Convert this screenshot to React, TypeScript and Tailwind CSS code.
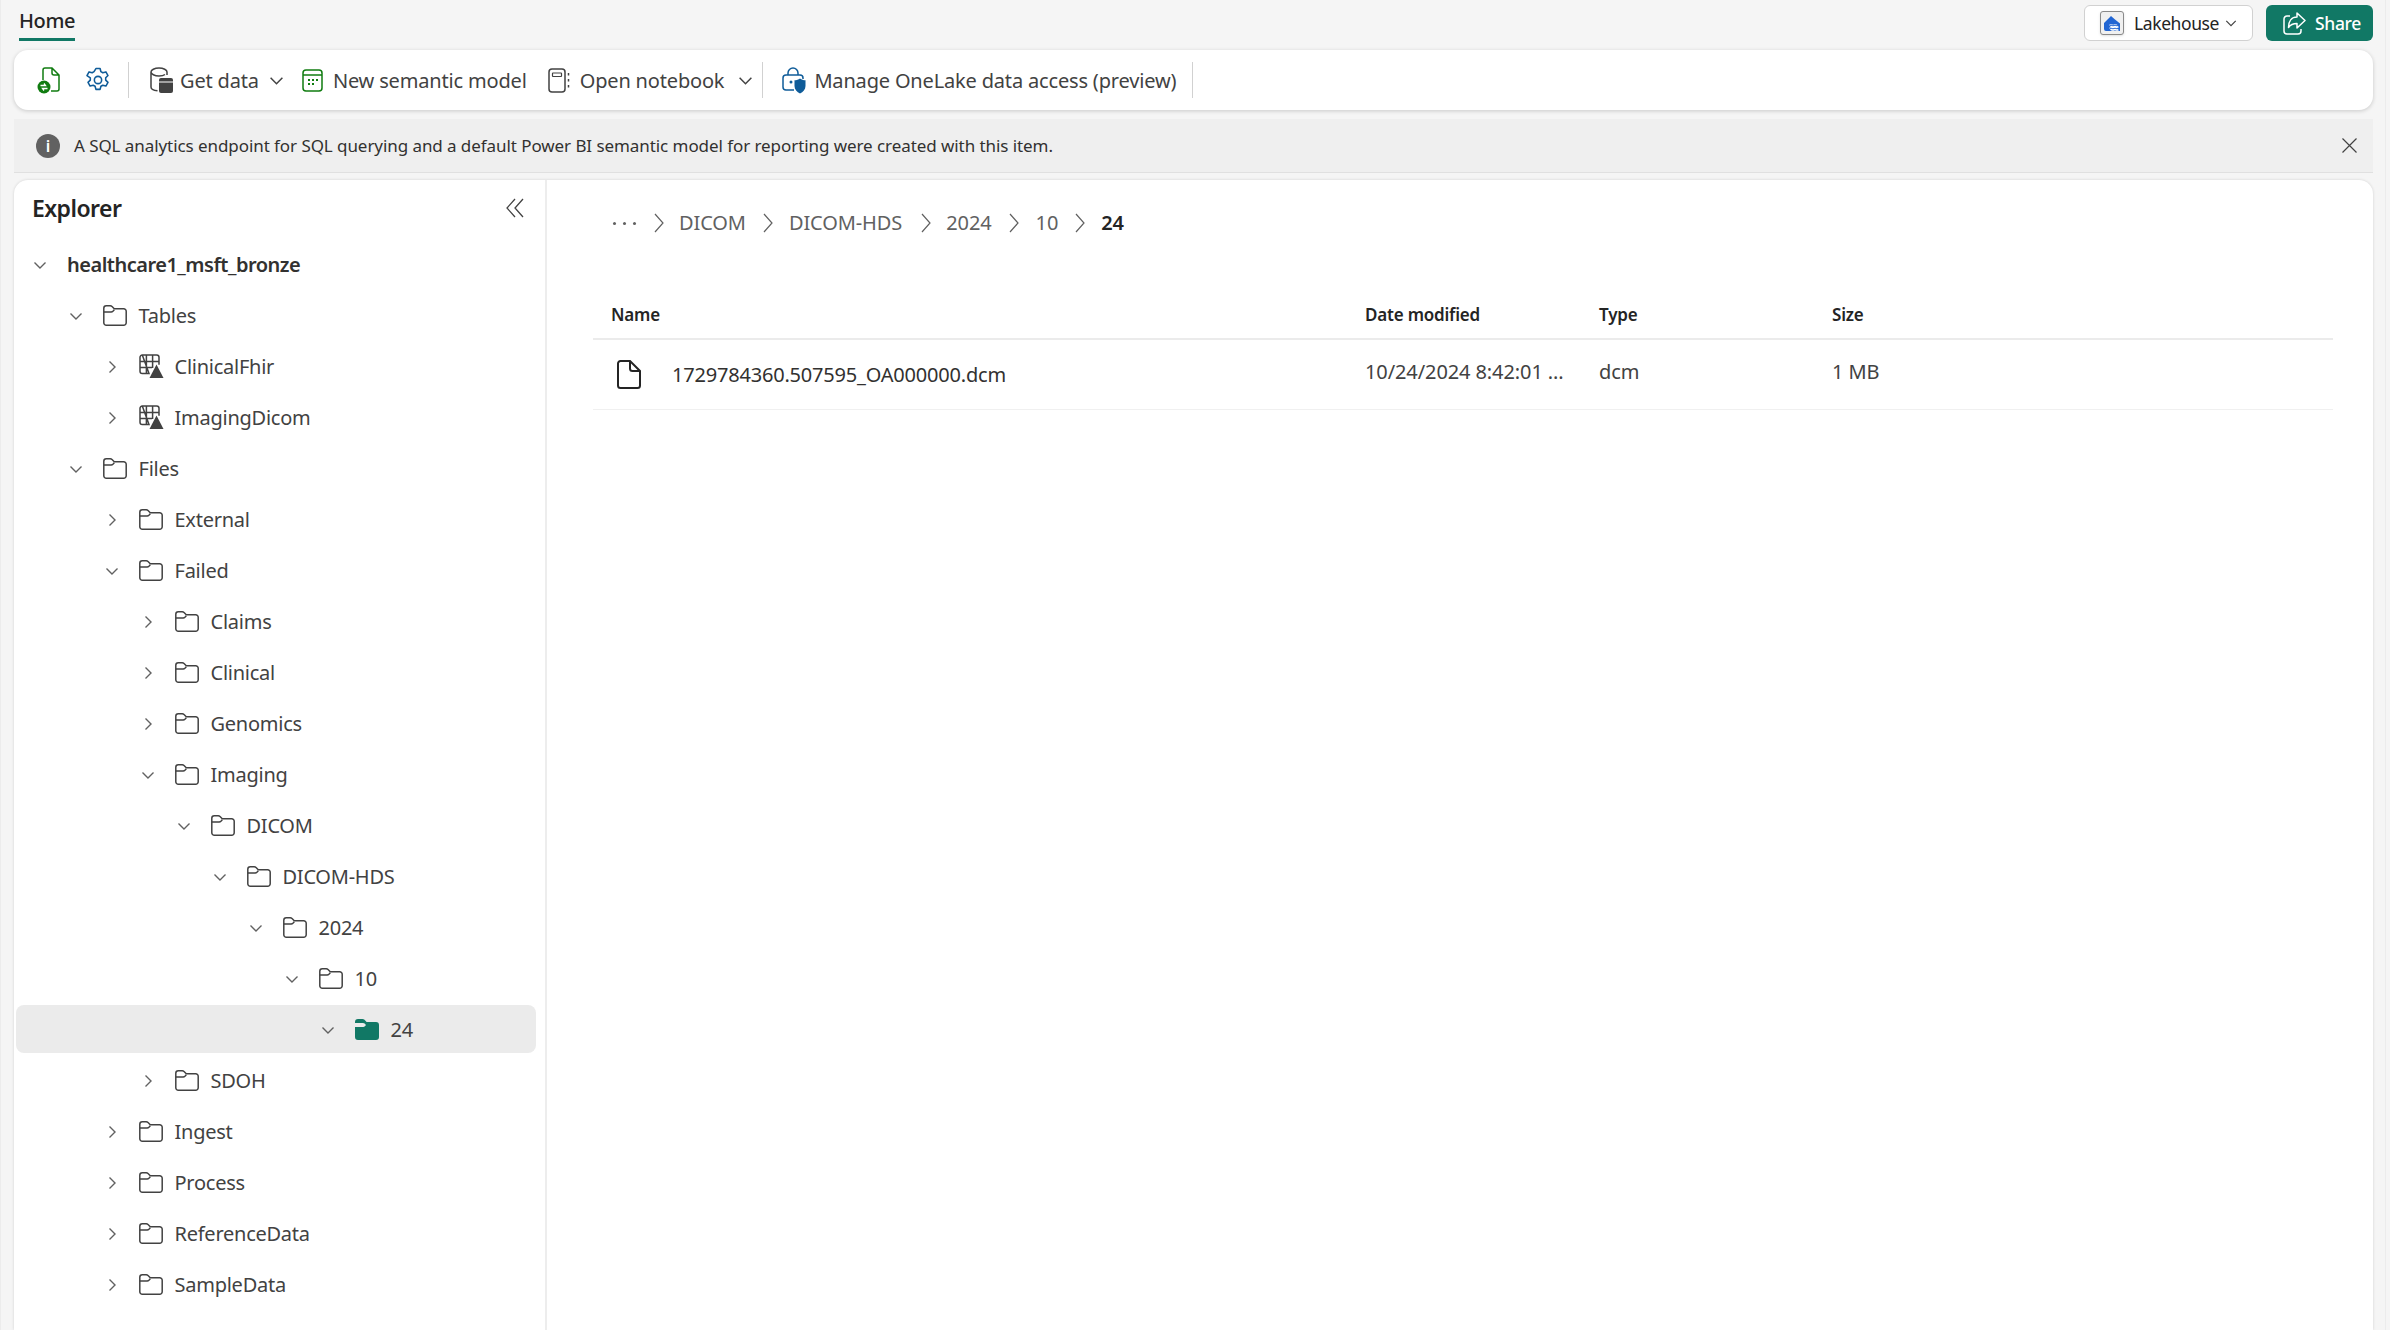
import React from "react";

const font = "font-['Noto_Sans','Open_Sans',sans-serif]";

function Folder({ filled }: { filled?: boolean }) {
  if (filled) {
    return (
      <svg width="24" height="21" viewBox="0 0 24 21" className="shrink-0">
        <path d="M0 3a3 3 0 0 1 3-3h4.5a3 3 0 0 1 2 .8L11.6 3H21a3 3 0 0 1 3 3v12a3 3 0 0 1-3 3H3a3 3 0 0 1-3-3V8h8.2a2.5 2.5 0 0 0 1.7-.7L11 6 9.6 4.6A2.5 2.5 0 0 0 8 4H0z" fill="#117865" />
      </svg>
    );
  }
  return (
    <svg width="24" height="21" viewBox="0 0 24 21" fill="none" stroke="#424242" strokeWidth="1.5" className="shrink-0">
      <path d="M.8 3.3A2.5 2.5 0 0 1 3.3.8h3.9a2.5 2.5 0 0 1 1.8.7l2.3 2.3h9.4a2.5 2.5 0 0 1 2.5 2.5v11.4a2.5 2.5 0 0 1-2.5 2.5H3.3a2.5 2.5 0 0 1-2.5-2.5z" />
      <path d="M.8 7h7.4a2.4 2.4 0 0 0 1.7-.7l1.4-1.6" />
    </svg>
  );
}

function TableIcon() {
  return (
    <svg width="25" height="25" viewBox="0 0 25 25" fill="none" className="shrink-0">
      <path d="M3.3 1h14.4A2.3 2.3 0 0 1 20 3.3v7.5M10 19.5H3.3A2.3 2.3 0 0 1 1 17.2V3.3A2.3 2.3 0 0 1 3.3 1zM1 7.5h19M1 13.5h12M7.4 1v18.5M13.6 1v13" stroke="#424242" strokeWidth="1.5" />
      <path d="M17.5 10.5 24.5 24h-14z" fill="#424242" />
    </svg>
  );
}

function Chevron({ open, size = 14, color = "#616161" }: { open?: boolean; size?: number; color?: string }) {
  return (
    <svg width={size} height={size} viewBox="0 0 14 14" fill="none" stroke={color} strokeWidth="1.4" className="shrink-0">
      {open ? <path d="M1.5 4.5 7 10l5.5-5.5" /> : <path d="M4.5 1.5 10 7l-5.5 5.5" />}
    </svg>
  );
}

function Crumb() {
  return (
    <svg width="10" height="20" viewBox="0 0 10 20" fill="none" stroke="#616161" strokeWidth="1.2" className="shrink-0">
      <path d="M1 1l8 9-8 9" />
    </svg>
  );
}

type Row = { label: string; depth: number; open?: boolean; kind?: "root" | "table" | "selected" };
const rows: Row[] = [
  { label: "healthcare1_msft_bronze", depth: 0, open: true, kind: "root" },
  { label: "Tables", depth: 1, open: true },
  { label: "ClinicalFhir", depth: 2, kind: "table" },
  { label: "ImagingDicom", depth: 2, kind: "table" },
  { label: "Files", depth: 1, open: true },
  { label: "External", depth: 2 },
  { label: "Failed", depth: 2, open: true },
  { label: "Claims", depth: 3 },
  { label: "Clinical", depth: 3 },
  { label: "Genomics", depth: 3 },
  { label: "Imaging", depth: 3, open: true },
  { label: "DICOM", depth: 4, open: true },
  { label: "DICOM-HDS", depth: 5, open: true },
  { label: "2024", depth: 6, open: true },
  { label: "10", depth: 7, open: true },
  { label: "24", depth: 8, open: true, kind: "selected" },
  { label: "SDOH", depth: 3 },
  { label: "Ingest", depth: 2 },
  { label: "Process", depth: 2 },
  { label: "ReferenceData", depth: 2 },
  { label: "SampleData", depth: 2 },
];

function TreeRow({ row }: { row: Row }) {
  const selected = row.kind === "selected";
  const root = row.kind === "root";
  return (
    <div className="h-[51px] flex items-center relative">
      {selected && <div className="absolute left-[2px] right-[9px] top-[1px] bottom-[2px] rounded-[8px] bg-[#ebebeb]" />}
      <div className="relative flex items-center" style={{ paddingLeft: 19 + row.depth * 36 }}>
        <Chevron open={row.open} />
        {root ? (
          <span className="ml-[20px] text-[20px] font-semibold text-[#323130] tracking-[-0.5px]">{row.label}</span>
        ) : (
          <>
            <span className="ml-[20px] mr-[11.5px] w-[24px] h-[25px] flex items-center justify-center">
              {row.kind === "table" ? <TableIcon /> : <Folder filled={selected} />}
            </span>
            <span className="text-[20px] text-[#424242] tracking-[-0.25px]">{row.label}</span>
          </>
        )}
      </div>
    </div>
  );
}

function ToolButton({ icon, label, caret, gap = "ml-[8px]", caretGap = "ml-[11px]" }: { icon: React.ReactNode; label: string; caret?: boolean; gap?: string; caretGap?: string }) {
  return (
    <div className="flex items-center h-[36px]">
      {icon}
      <span className={`${gap} pt-[2px] text-[20px] text-[#424242] tracking-[-0.17px] whitespace-nowrap`}>{label}</span>
      {caret && (
        <span className={caretGap}>
          <Chevron open size={15} color="#424242" />
        </span>
      )}
    </div>
  );
}

export default function App() {
  return (
    <div className={`${font} w-[2390px] h-[1330px] overflow-hidden bg-[#f5f5f5] flex`}>
      <div className="w-[2385px] shrink-0 border-l border-[#ececec] flex flex-col pl-[13px] pr-[12px]">
        <div className="h-[50px] flex items-start justify-between shrink-0">
          <div className="ml-[5px] h-[41px] flex flex-col justify-between pt-[6px]">
            <span className="text-[20px] leading-[30px] font-medium text-[#242424] tracking-[-0.4px]">Home</span>
            <div className="h-[3px] bg-[#117865]" />
          </div>
          <div className="flex gap-[13px] pt-[5px]">
            <div className="h-[36px] w-[169px] bg-white border border-[#d1d1d1] rounded-[6px] flex items-center pl-[15px]">
              <div className="w-[24px] h-[24px] bg-[#f0f0f0] border border-[#8a8a8a] rounded-[3px] flex items-center justify-center shadow-sm">
                <svg width="18" height="18" viewBox="0 0 18 18">
                  <path d="M1 9l7-7 4 3.5 5 4V17H3a2 2 0 0 1-2-2z" fill="#2266d3" />
                  <path d="M7 12c1.5-1 2.5 1 4 0s2.5 1 4 0M7 15c1.5-1 2.5 1 4 0s2.5 1 4 0" stroke="#fff" strokeWidth="3" fill="none" />
                  <path d="M7 11.5c1.5-1 2.5 1 4 0s2.5 1 4 0M7 14.5c1.5-1 2.5 1 4 0s2.5 1 4 0" stroke="#2266d3" strokeWidth="1" fill="none" />
                </svg>
              </div>
              <span className="ml-[10px] text-[17.5px] text-[#242424] tracking-[-0.4px]">Lakehouse</span>
              <span className="ml-[6px]">
                <Chevron open size={12} color="#424242" />
              </span>
            </div>
            <div className="h-[36px] w-[107px] bg-[#117865] rounded-[6px] flex items-center pl-[17px]">
              <svg width="23" height="23" viewBox="0 0 23 23" fill="none" stroke="#fff" strokeWidth="1.5">
                <path d="M7 4H4a3 3 0 0 0-3 3v12a3 3 0 0 0 3 3h11a3 3 0 0 0 3-3v-2" />
                <path d="M14 1l8 7.5-8 7.5v-4.500c-4 0-6.500 1-8.500 4 0-6 3-10.500 8.500-10.500z" strokeLinejoin="round" />
              </svg>
              <span className="ml-[9px] text-[17.5px] font-medium text-white tracking-[-0.35px]">Share</span>
            </div>
          </div>
        </div>

        <div className="h-[60px] shrink-0 bg-white rounded-[14px] shadow-[0_1px_4px_rgba(0,0,0,0.18)] flex items-center pl-[23px]">
          <svg width="23" height="27" viewBox="0 0 23 27" fill="none" className="shrink-0">
            <path d="M6 13V3a2 2 0 0 1 2-2h7l7 7v14a2 2 0 0 1-2 2h-6M15 1v5a2 2 0 0 0 2 2h5" stroke="#107c10" strokeWidth="1.5" />
            <circle cx="7" cy="20" r="6.5" fill="#107c10" />
            <path d="M3.5 18.5h5l-1.500-2M10.500 21.500h-5l1.500 2" stroke="#fff" strokeWidth="1.3" />
          </svg>
          <svg width="26" height="26" viewBox="0 0 25 25" fill="none" stroke="#0f5c99" strokeWidth="1.5" className="ml-[25px] shrink-0" strokeLinejoin="round">
            <circle cx="12.5" cy="12.5" r="3.5" />
            <path d="M10.5 1.5h4l.8 3 1.8 1 3-.8 2 3.5-2.2 2.2v2.2l2.2 2.2-2 3.5-3-.8-1.800 1-.8 3h-4l-.8-3-1.800-1-3 .8-2-3.500 2.200-2.200v-2.200L1.900 8.200l2-3.500 3 .8 1.800-1z" />
          </svg>
          <div className="ml-[17px] w-px h-[36px] bg-[#d1d1d1]" />
          <div className="ml-[21px]">
            <ToolButton
              label="Get data"
              caret
              gap="ml-[7px]"
              caretGap="ml-[10px]"
              icon={
                <svg width="23" height="26" viewBox="0 0 23 26" fill="none" className="shrink-0">
                  <path d="M17 8V5c0-2-3.500-4-8-4S1 3 1 5v15c0 2 3 3.500 6.500 3.800M1 5c0 2 3.500 4 8 4 3 0 5-.7 6-1.500" stroke="#424242" strokeWidth="1.5" />
                  <rect x="9" y="11" width="14" height="15" rx="2" fill="#424242" />
                  <path d="M9 15h14" stroke="#fff" strokeWidth="1" />
                </svg>
              }
            />
          </div>
          <div className="ml-[18px]">
            <ToolButton
              label="New semantic model"
              gap="ml-[10px]"
              icon={
                <svg width="21" height="23" viewBox="0 0 21 23" fill="none" className="shrink-0">
                  <rect x="1" y="1" width="19" height="21" rx="3" stroke="#107c10" strokeWidth="1.5" />
                  <path d="M1 6h19" stroke="#107c10" strokeWidth="1.5" />
                  <path d="M6 10h2v2H6zM10 10h2v2h-2zM14 10h2v2h-2zM6 14h2v2H6zM10 14h2v2h-2z" fill="#107c10" />
                </svg>
              }
            />
          </div>
          <div className="ml-[21px]">
            <ToolButton
              label="Open notebook"
              gap="ml-[10px]"
              caret
              caretGap="ml-[14px]"
              icon={
                <svg width="22" height="25" viewBox="0 0 22 25" fill="none" stroke="#424242" strokeWidth="1.5" className="shrink-0">
                  <rect x="1" y="1" width="16" height="23" rx="3" />
                  <rect x="4.5" y="5" width="9" height="3.5" rx=".5" strokeWidth="1.2" />
                  <path d="M20.5 5v2.5M20.5 11v2.5M20.5 17v2.5" />
                </svg>
              }
            />
          </div>
          <div className="ml-[9px] w-px h-[36px] bg-[#d1d1d1]" />
          <div className="ml-[19px]">
            <ToolButton
              label="Manage OneLake data access (preview)"
              gap="ml-[8px]"
              icon={
                <svg width="24" height="27" viewBox="0 0 24 27" fill="none" className="shrink-0">
                  <path d="M6 8V6a5 5 0 0 1 10 0v2" stroke="#0f5c99" strokeWidth="1.5" />
                  <path d="M12 23H4a3 3 0 0 1-3-3V11a3 3 0 0 1 3-3h14a3 3 0 0 1 3 3v1" stroke="#0f5c99" strokeWidth="1.5" />
                  <circle cx="9" cy="15" r="1.5" fill="#0f5c99" />
                  <path d="M18 11.5c1.500 1.200 3.500 1.800 5.500 1.800V19c0 3.500-2.500 6-5.500 7.500-3-1.500-5.500-4-5.500-7.500v-5.700c2 0 4-.6 5.500-1.800z" fill="#0f5c99" />
                </svg>
              }
            />
          </div>
          <div className="ml-[16px] w-px h-[36px] bg-[#d1d1d1]" />
        </div>

        <div className="mt-[9px] h-[54px] shrink-0 bg-[#efefef] border-b border-[#e0e0e0] flex items-center pl-[22px] pr-[16px]">
          <div className="w-[24px] h-[24px] rounded-full bg-[#616161] text-white flex items-center justify-center text-[16px] font-semibold">i</div>
          <span className="ml-[14px] pt-[1px] text-[17px] text-[#323130] tracking-[-0.07px]">A SQL analytics endpoint for SQL querying and a default Power BI semantic model for reporting were created with this item.</span>
          <svg width="15" height="15" viewBox="0 0 15 15" stroke="#424242" strokeWidth="1.2" className="ml-auto shrink-0">
            <path d="M.5.5l14 14M14.5.5l-14 14" />
          </svg>
        </div>

        <div className="mt-[7px] flex-1 min-h-0 bg-white rounded-t-[14px] shadow-[0_0_3px_rgba(0,0,0,0.15)] flex overflow-hidden">
          <aside className="w-[533px] shrink-0 border-r-2 border-[#ededed] flex flex-col">
            <div className="h-[59px] pb-[3px] pl-[18px] pr-[21px] flex items-center justify-between">
              <span className="text-[23px] font-semibold text-[#242424] tracking-[-0.55px]">Explorer</span>
              <svg width="18" height="20" viewBox="0 0 18 20" fill="none" stroke="#424242" strokeWidth="1.3">
                <path d="M9 1L1 10l8 9M17 1l-8 9 8 9" />
              </svg>
            </div>
            <div>
              {rows.map((r) => (
                <TreeRow key={r.label + r.depth} row={r} />
              ))}
            </div>
          </aside>
          <main className="flex-1 min-w-0 pl-[46px] pr-[40px] flex flex-col">
            <div className="h-[86px] pl-[20px] flex items-center text-[20px] text-[#616161] tracking-[-0.1px]">
              <span className="w-[23px] flex justify-between">
                <i className="w-[3px] h-[3px] rounded-full bg-[#616161]" />
                <i className="w-[3px] h-[3px] rounded-full bg-[#616161]" />
                <i className="w-[3px] h-[3px] rounded-full bg-[#616161]" />
              </span>
              <span className="ml-[18px]"><Crumb /></span>
              <span className="ml-[15px]">DICOM</span>
              <span className="ml-[17px]"><Crumb /></span>
              <span className="ml-[16px]">DICOM-HDS</span>
              <span className="ml-[19px]"><Crumb /></span>
              <span className="ml-[15px]">2024</span>
              <span className="ml-[17px]"><Crumb /></span>
              <span className="ml-[17px]">10</span>
              <span className="ml-[17px]"><Crumb /></span>
              <span className="ml-[16px] font-semibold text-[#242424]">24</span>
            </div>
            <div className="mt-[31px] grid grid-cols-[754px_234px_233px_1fr] h-[43px] pb-[5px] items-center border-b-2 border-[#ebebeb] pl-[18px] text-[17px] font-semibold text-[#242424] tracking-[-0.2px]">
              <span>Name</span>
              <span>Date modified</span>
              <span>Type</span>
              <span>Size</span>
            </div>
            <div className="grid grid-cols-[754px_234px_233px_1fr] h-[70px] items-center border-b border-[#f0f0f0] pl-[18px] text-[20px] text-[#424242] tracking-[-0.1px]">
              <div className="flex items-center">
                <svg width="24" height="29" viewBox="0 0 24 29" fill="none" stroke="#242424" strokeWidth="2" className="ml-[6px] shrink-0">
                  <path d="M3.5 1H13l10 10v14.500a2.500 2.500 0 0 1-2.500 2.500h-17A2.500 2.500 0 0 1 1 25.500v-22A2.500 2.500 0 0 1 3.500 1z" />
                  <path d="M13 1v7.500a2.500 2.500 0 0 0 2.500 2.500H23" />
                </svg>
                <span className="ml-[31px] mt-[1px] text-[#323130] tracking-[-0.2px]">1729784360.507595_OA000000.dcm</span>
              </div>
              <span className="-mt-[5px] whitespace-nowrap">10/24/2024 8:42:01 ...</span>
              <span className="-mt-[5px]">dcm</span>
              <span className="-mt-[5px]">1 MB</span>
            </div>
          </main>
        </div>
      </div>
      <div className="flex-1 border-l border-[#ececec]" />
    </div>
  );
}
